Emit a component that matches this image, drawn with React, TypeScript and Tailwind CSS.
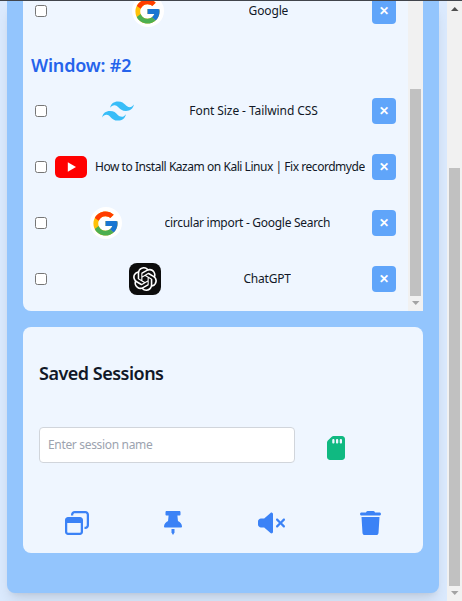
import type { ReactNode } from "react";
import { FaRegWindowRestore, FaSdCard, FaTrash, FaVolumeXmark } from "react-icons/fa6";
import { FcGoogle } from "react-icons/fc";
import { SiOpenai } from "react-icons/si";

function GoogleIcon() {
  return (
    <span className="flex size-8 shrink-0 items-center justify-center rounded-full bg-white">
      <FcGoogle size={29} />
    </span>
  );
}

function TailwindIcon() {
  return (
    <svg className="size-8 shrink-0" viewBox="0 0 54 54" fill="#38bdf8">
      <path d="M27 10.8c-7.2 0-11.7 3.6-13.5 10.8 2.7-3.6 5.85-4.95 9.45-4.05 2.05.51 3.52 2 5.15 3.65C30.74 23.9 33.81 27 40.5 27c7.2 0 11.7-3.6 13.5-10.8-2.7 3.6-5.85 4.95-9.45 4.05-2.05-.51-3.52-2-5.15-3.65C36.76 13.9 33.69 10.8 27 10.8zM13.5 27C6.3 27 1.8 30.6 0 37.8c2.7-3.6 5.85-4.95 9.45-4.05 2.05.51 3.52 2 5.15 3.65 2.64 2.7 5.71 5.8 12.4 5.8 7.2 0 11.7-3.6 13.5-10.8-2.7 3.6-5.85 4.95-9.45 4.05-2.05-.51-3.52-2-5.15-3.65C23.26 30.1 20.19 27 13.5 27z" />
    </svg>
  );
}

function YoutubeIcon() {
  return (
    <svg className="size-8 shrink-0" viewBox="0 0 32 32">
      <rect x="0" y="5" width="32" height="22" rx="5" fill="#f00" />
      <path d="M12.8 11.2v9.6L21 16z" fill="#fff" />
    </svg>
  );
}

function ChatIcon() {
  return (
    <span className="flex size-8 shrink-0 items-center justify-center rounded-lg bg-[#0d0d0d] text-white">
      <SiOpenai size={24} />
    </span>
  );
}

function PinIcon() {
  return (
    <svg className="h-6 w-[18px]" viewBox="0 0 384 512" fill="currentColor">
      <path d="M56 0h272c13.300 0 24 10.700 24 24v48c0 13.300-10.700 24-24 24h-42.200l12.200 118.300c48.500 22.500 86 63 86 113.700 0 13.300-10.700 24-24 24H24c-13.300 0-24-10.700-24-24 0-50.700 37.500-91.200 86-113.700L98.200 96H56c-13.300 0-24-10.700-24-24V24C32 10.700 42.700 0 56 0z" />
      <path d="M160 384h64v72l-32 56-32-56z" />
    </svg>
  );
}

function TabRow({ icon, title, tracking }: { icon: ReactNode; title: string; tracking: string }) {
  return (
    <li className="flex h-14 items-center pr-3 pl-3">
      <input type="checkbox" className="size-3 shrink-0" />
      <div className="ml-2 flex w-[310px] shrink-0 items-center justify-evenly overflow-hidden">
        {icon}
        <span className={`ml-2 overflow-hidden text-xs whitespace-nowrap text-[#111827] ${tracking}`}>{title}</span>
      </div>
      <button className="ml-[7px] flex h-[26px] w-6 shrink-0 items-center justify-center rounded bg-[#60a5fa] pb-px text-xs font-bold text-white">
        ✕
      </button>
    </li>
  );
}

function Arrow({ up = false, active = false }: { up?: boolean; active?: boolean }) {
  return (
    <svg className="h-[15px] w-[15px] shrink-0" viewBox="0 0 15 15" fill={active ? "#505050" : "#a3a3a3"}>
      <path d={up ? "M4 10h7.5L7.75 6z" : "M4 5h7.5L7.75 9z"} />
    </svg>
  );
}

export default function App() {
  return (
    <div className="flex h-[601px] w-[462px] overflow-hidden border-t border-[#41454c] bg-[#dbeafe] font-['Noto_Sans',sans-serif]">
      <div className="w-[447px] shrink-0 overflow-hidden pl-[7px]">
        <main className="h-[592px] w-[432px] rounded-b-lg bg-[#93c5fd] px-4 shadow-lg">
          <section className="flex h-[310px] overflow-hidden rounded-bl-lg bg-[#eff6ff]">
            <div className="h-[310px] w-[385px] overflow-hidden">
              <ul className="-mt-[18px]">
                <TabRow icon={<GoogleIcon />} title="Google" tracking="tracking-[-0.15px]" />
              </ul>
              <h2 className="mt-3 ml-2 h-8 text-lg leading-[29px] font-semibold tracking-[-0.2px] text-[#2563eb]">
                Window: #2
              </h2>
              <ul>
                <TabRow icon={<TailwindIcon />} title="Font Size - Tailwind CSS" tracking="tracking-[-0.08px]" />
                <TabRow
                  icon={<YoutubeIcon />}
                  title="How to Install Kazam on Kali Linux | Fix recordmydesktop"
                  tracking="tracking-[-0.46px]"
                />
                <TabRow icon={<GoogleIcon />} title="circular import - Google Search" tracking="tracking-[-0.29px]" />
                <TabRow icon={<ChatIcon />} title="ChatGPT" tracking="tracking-[-0.2px]" />
              </ul>
            </div>
            <div className="flex w-[15px] flex-col items-center bg-[#f1f1f1] pt-[88px]">
              <div className="h-[207px] w-[11px] bg-[#c1c1c1]" />
              <Arrow />
            </div>
          </section>
          <section className="mt-4 h-[226px] rounded-lg bg-[#eff6ff] px-1 pt-8">
            <h2 className="ml-3 h-7 text-lg leading-[29px] font-semibold tracking-[-0.5px] text-[#111827]">
              Saved Sessions
            </h2>
            <div className="mt-10 ml-3 flex items-center">
              <input
                className="h-9 w-64 rounded border border-[#d1d5db] bg-white px-2 pb-0.5 text-xs tracking-[-0.33px] placeholder:text-[#9ca3af]"
                placeholder="Enter session name"
              />
              <FaSdCard size={24} className="mt-1.5 ml-[29px] text-[#10b981]" />
            </div>
            <div className="mt-12 flex justify-around text-[#3b82f6]">
              <FaRegWindowRestore className="h-6 w-6" />
              <PinIcon />
              <FaVolumeXmark className="h-6 w-[27px]" />
              <FaTrash className="h-6 w-[21px]" />
            </div>
          </section>
        </main>
      </div>
      <div className="flex w-[15px] shrink-0 flex-col items-center bg-[#f1f1f1]">
        <Arrow up active />
        <div className="mt-[152px] h-[418px] w-[11px] bg-[#c1c1c1]" />
        <Arrow />
      </div>
    </div>
  );
}
